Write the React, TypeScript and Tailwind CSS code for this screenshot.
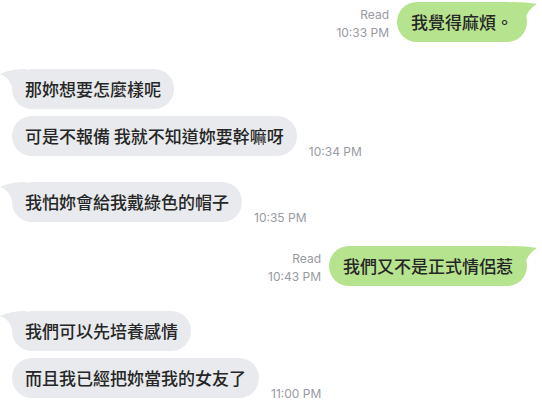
import React from "react";

type Msg =
  | { side: "in"; text: string; tail?: boolean; time?: string; gap: string }
  | { side: "out"; text: string; time: string; gap: string };

const messages: Msg[] = [
  { side: "out", text: "我覺得麻煩。", time: "10:33 PM", gap: "mt-[2px]" },
  { side: "in", text: "那妳想要怎麼樣呢", tail: true, gap: "mt-[27px]" },
  { side: "in", text: "可是不報備 我就不知道妳要幹嘛呀", time: "10:34 PM", gap: "mt-[7px]" },
  { side: "in", text: "我怕妳會給我戴綠色的帽子", tail: true, time: "10:35 PM", gap: "mt-[26px]" },
  { side: "out", text: "我們又不是正式情侶惹", time: "10:43 PM", gap: "mt-[24px]" },
  { side: "in", text: "我們可以先培養感情", tail: true, gap: "mt-[25px]" },
  { side: "in", text: "而且我已經把妳當我的女友了", time: "11:00 PM", gap: "mt-[7px]" },
];

const cjk = "font-['Noto_Sans_CJK_TC','Noto_Sans_CJK_SC',sans-serif]";
const meta = "font-['Inter',sans-serif] text-[12px] leading-[18px] text-[#979a9f]";

const Bubble = ({ text, out, tail }: { text: string; out?: boolean; tail?: boolean }) => (
  <div
    className={`relative h-10 flex items-center rounded-[20px] ${
      out ? "bg-[#b6e38e] px-[14px]" : "bg-[#e8eaed] px-[13px]"
    }`}
  >
    {/* Tail */}
    {tail && !out && (
      <svg className="absolute -left-3 top-0" width="26" height="20" viewBox="0 0 26 20">
        <path d="M0 5 Q10 0 26 0 L26 18 L12 18 Q9 8 0 5 Z" fill="#e8eaed" />
      </svg>
    )}
    {tail && out && (
      <svg className="absolute -right-[10px] top-0" width="26" height="20" viewBox="0 0 26 20">
        <path d="M26 2 Q16 0 0 0 L0 18 L14 18 Q17 7 26 2 Z" fill="#b6e38e" />
      </svg>
    )}
    <span className={`relative ${cjk} text-[17px] leading-6 font-medium text-[#262626] whitespace-nowrap`}>
      {text}
    </span>
  </div>
);

export default function App() {
  return (
    <div className="w-[542px] h-[411px] bg-white overflow-hidden flex flex-col pl-3 pr-[15px]">
      {messages.map((m, i) =>
        m.side === "out" ? (
          // Sent
          <div key={i} className={`${m.gap} flex justify-end items-end gap-2`}>
            <div className={`${meta} text-right`}>
              <div>Read</div>
              <div>{m.time}</div>
            </div>
            <Bubble text={m.text} out tail />
          </div>
        ) : (
          // Received
          <div key={i} className={`${m.gap} flex items-end gap-[12px]`}>
            <Bubble text={m.text} tail={m.tail} />
            {m.time && <div className={`${meta} -mb-[5px]`}>{m.time}</div>}
          </div>
        )
      )}
    </div>
  );
}
